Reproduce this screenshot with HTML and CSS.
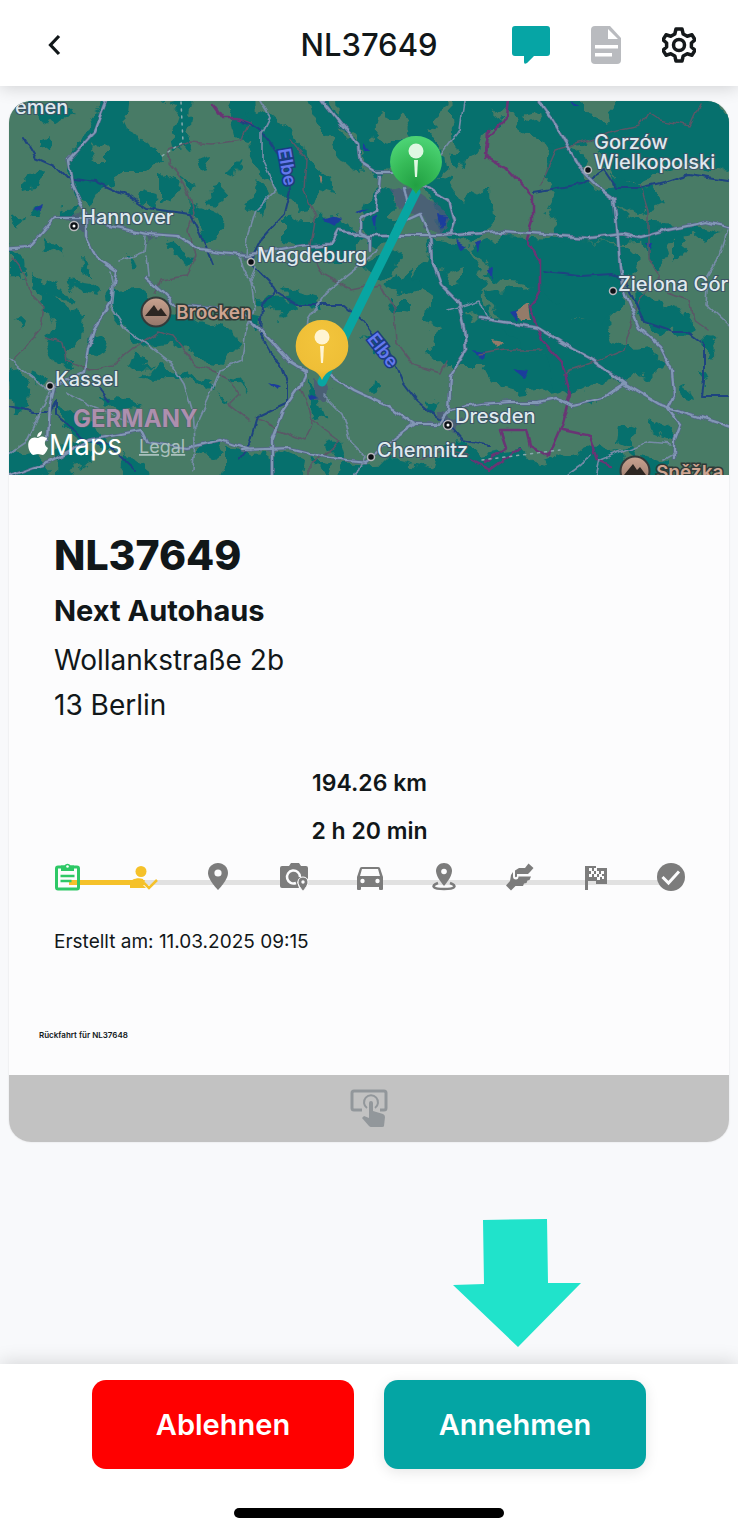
FILE: index.html
```html
<!DOCTYPE html>
<html lang="de">
<head>
<meta charset="utf-8">
<meta name="viewport" content="width=device-width, initial-scale=1">
<title>NL37649</title>
<link rel="stylesheet" href="styles.css">
</head>
<body>
<header class="topbar">
  <button class="icon-btn" aria-label="Zurück">
    <svg width="14" height="22" viewBox="0 0 14 22"><path d="M12 2 3.500 11l8.500 9" fill="none" stroke="#111719" stroke-width="3.200"/></svg>
  </button>
  <h1 class="topbar-title">NL37649</h1>
  <nav class="topbar-actions">
    <button class="icon-btn" aria-label="Nachrichten">
      <svg width="38" height="38" viewBox="0 0 38 38"><path d="M3 0h32q3 0 3 3v24q0 3-3 3H22l-7 7q-3 2-3-1v-6H3q-3 0-3-3V3q0-3 3-3z" fill="#06a5a5"/></svg>
    </button>
    <button class="icon-btn" aria-label="Dokument">
      <svg width="30" height="38" viewBox="0 0 30 38"><path d="M4 0h15l11 12v22q0 4-4 4H4q-4 0-4-4V4q0-4 4-4z" fill="#b9bbbf"/><path d="M17 3v10h10zM4 19h23v3.500H4zM4 27h17v3.500H4z" fill="#fff"/></svg>
    </button>
    <button class="icon-btn" aria-label="Einstellungen">
      <svg width="34" height="36" viewBox="0 0 34 36"><path d="M14 2h6l1.200 5 4 2.200 4.800-1.400 3 5-3.600 3.200v4l3.600 3.200-3 5-4.800-1.400-4 2.200-1.200 5h-6l-1.200-5-4-2.200L4 28.200l-3-5L4.600 20v-4L1 12.800l3-5 4.800 1.400 4-2.200z" fill="none" stroke="#15191b" stroke-width="3.500" stroke-linejoin="round"/><circle cx="17" cy="18" r="5.500" fill="none" stroke="#15191b" stroke-width="3.500"/></svg>
    </button>
  </nav>
</header>

<main class="content">
  <article class="card">
    <svg class="map" viewBox="9 101 720 374" preserveAspectRatio="xMidYMid slice" role="img" aria-label="Karte mit Route">
      <defs>
        <filter id="rough" x="-5%" y="-5%" width="110%" height="110%" color-interpolation-filters="sRGB">
          <feTurbulence type="fractalNoise" baseFrequency="0.06" numOctaves="3" seed="8" result="n"/>
          <feDisplacementMap in="SourceGraphic" in2="n" scale="20" xChannelSelector="R" yChannelSelector="G"/>
        </filter>
        <filter id="wiggle" x="-5%" y="-5%" width="110%" height="110%" color-interpolation-filters="sRGB">
          <feTurbulence type="fractalNoise" baseFrequency="0.07" numOctaves="2" seed="3" result="n"/>
          <feDisplacementMap in="SourceGraphic" in2="n" scale="7" xChannelSelector="R" yChannelSelector="G"/>
        </filter>
        <radialGradient id="green" cx=".5" cy=".85" r=".8"><stop offset="0" stop-color="#22a043"/><stop offset=".55" stop-color="#36bb58"/><stop offset="1" stop-color="#4bd273"/></radialGradient>
        <radialGradient id="yellow" cx=".5" cy=".35" r=".7"><stop offset="0" stop-color="#f3c53c"/><stop offset=".7" stop-color="#efbf37"/><stop offset="1" stop-color="#dfa622"/></radialGradient>
        <linearGradient id="peak" x2="0" y2="1"><stop stop-color="#c9a28f"/><stop offset="1" stop-color="#94766a"/></linearGradient>
      </defs>
      <rect x="0" y="90" width="740" height="400" fill="#487b66"/>

      <g fill="#06706d" filter="url(#rough)">
        <path fill-rule="evenodd" d="M107 90H128L126 118 135 138 155 150 160 162 148 172 120 172 112 184 96 194 88 208 76 192 68 172 70 155 90 135ZM92 148 98 142 106 150 106 164 98 164Z"/>
        <path d="M28 104 66 102 72 116 52 122 32 112ZM36 140 52 136 50 150 38 152ZM24 180 44 172 40 186 26 188ZM30 210 42 204 44 216 32 216ZM60 212 76 208 74 220 60 218ZM12 218 22 216 18 230ZM44 238 62 248 60 258 46 248ZM82 258 96 264 96 272 84 270ZM10 244 22 262 24 282 10 270ZM30 274 60 284 72 302 54 298 34 290ZM126 256 138 264 134 274ZM166 240 188 256 184 264 168 254Z"/>
        <path d="M162 90 196 90 190 118 186 136 190 146 176 150 172 132 178 114ZM160 178 174 174 180 190 174 202 160 200ZM144 190 156 194 150 206 140 204ZM184 176 196 184 190 190ZM196 156 214 152 208 170 200 172ZM226 172 242 156 236 176ZM208 186 224 184 222 206 210 204ZM184 200 216 210 226 230 206 244 196 222ZM224 90 260 90 262 144 236 140Z"/>
        <path d="M246 114 266 110 290 130 304 148 306 160 320 172 330 176 332 196 318 192 312 212 296 214 284 190 264 176 250 150ZM256 178 270 194 262 218 248 206ZM284 218 340 216 362 238 352 260 322 262 300 246 284 242Z"/>
        <path d="M308 90 336 110 346 138 358 150 362 172 340 162 332 140 314 120Z"/>
        <path fill-rule="evenodd" d="M334 90H450L440 118 428 132 446 146 448 168 430 184 412 176 394 160 384 176 366 166 350 132 338 122ZM380 112 400 118 410 134 386 144 374 136Z"/>
        <path d="M374 188 394 196 386 214 398 222 394 238 372 246 360 224 368 204ZM426 180 450 182 462 200 490 188 494 228 468 246 440 234 434 204ZM450 90 490 90 500 122 482 136 476 160 456 170 452 136Z"/>
        <path fill-rule="evenodd" d="M486 90H570L584 104 604 130 590 140 562 150 546 144 524 134 520 118 498 112ZM526 112 540 110 542 120 532 122Z"/>
        <path d="M622 90 706 90 740 124 740 176 690 162 652 176 620 184 604 164 594 136 610 118Z"/>
        <path d="M548 142 580 152 588 180 610 200 628 216 650 224 700 228 724 232 690 238 620 242 560 240 548 212 558 192 544 174ZM610 176 650 186 664 204 640 216 614 202ZM594 194 614 190 622 206 600 208Z"/>
        <path d="M472 248 500 236 560 238 620 244 640 264 624 280 626 300 604 320 560 322 544 300 526 284 494 280ZM640 232 664 230 670 256 656 274 644 250ZM676 232 690 244 676 262Z"/>
        <path fill-rule="evenodd" d="M430 240 470 250 488 280 480 304 500 324 520 328 538 346 556 366 562 386 520 392 498 386 484 366 448 366 430 350 440 332 420 322 434 296 414 280ZM444 272 462 266 462 282 450 286ZM468 312 480 318 472 326Z"/>
        <path d="M484 294 530 288 560 306 576 322 604 318 612 340 636 352 640 374 600 384 576 396 554 388 548 356 528 352 504 332ZM624 350 650 346 666 364 650 380 630 372ZM606 372 618 370 616 380Z"/>
        <path d="M382 286 412 268 420 286 400 296ZM392 300 414 300 412 312 394 310ZM362 262 400 252 394 276 372 280ZM636 290 660 300 676 322 660 334 640 320ZM664 304 680 310 694 330 680 338ZM702 338 720 340 712 354ZM674 382 690 386 694 400 678 394ZM698 372 710 376 704 386Z"/>
        <path d="M108 292 134 288 160 310 196 318 232 330 236 350 222 364 196 360 178 342 144 346 124 330 112 314ZM40 292 58 300 84 316 82 338 66 352 70 368 52 366 44 344 54 326ZM94 334 108 342 104 356 90 352ZM66 280 92 284 98 296 72 290ZM10 320 24 318 20 328ZM8 368 20 366 30 382 28 404 14 416ZM28 368 48 376 38 390ZM126 370 132 354 152 368ZM140 376 160 366 196 378 216 382 210 390 180 378ZM214 390 232 400 230 404ZM226 376 240 378 244 390ZM98 396 128 398 144 410 118 414ZM56 402 74 412 96 430 110 446 88 446 62 424Z"/>
        <path d="M0 456 34 450 50 470 40 490 0 490ZM54 448 84 444 98 460 72 472 100 490 52 490ZM126 454 142 458 150 480 120 480ZM196 446 214 440 224 452 214 460 194 454ZM226 446 250 456 280 450 304 460 300 490 216 490 226 466ZM312 458 330 462 326 478ZM256 296 284 298 298 310 282 318ZM280 288 318 298 320 306 290 304ZM364 338 380 344 376 352ZM304 380 318 398 326 418 314 420ZM372 378 380 386 370 392ZM426 398 440 404 432 412ZM240 312 260 316 256 334ZM324 446 340 440 346 460ZM438 444 466 440 480 456 524 448 540 466 580 450 600 440 618 456 640 490 430 490ZM646 418 670 428 668 438 648 430ZM620 426 636 432 632 446 618 440ZM584 398 596 402 590 408ZM646 456 668 464 662 478 640 476ZM344 464 400 462 440 472 440 490 340 490ZM612 450 634 446 640 458Z"/>
      </g>

      <g fill="#4b587b" opacity=".75" filter="url(#rough)">
        <path d="M388 194 416 188 440 206 450 222 440 238 426 222 410 210 396 206ZM62 220 82 218 90 232 74 230ZM312 380 330 384 326 400 314 400ZM438 414 460 420 458 432 442 430ZM144 236 152 238 148 246ZM46 380 58 382 54 394ZM244 254 256 256 250 266Z"/>
      </g>
      <g fill="#1c3d9c" filter="url(#wiggle)">
        <path d="M32 209 42 205 40 212ZM322 220 336 216 342 218 334 226ZM355 212 368 208 360 214ZM372 216 377 216 376 232ZM438 214 446 216 442 230ZM456 240 466 246 460 250ZM474 242 480 240 478 252ZM488 270 493 266 492 280ZM364 142 370 150 364 150ZM510 312 518 310 516 320ZM512 368 528 370 524 378ZM472 350 486 352 484 358ZM268 383 280 386 276 390ZM570 102 580 106 574 106ZM645 244 652 244 650 250ZM308 394 318 398 310 400Z"/>
      </g>
      <path fill="#947b69" filter="url(#wiggle)" d="M516 312 528 304 530 320 520 320ZM492 340 504 342 498 348ZM320 176 324 178 322 184Z"/>

      <g fill="none" stroke-linejoin="round" stroke-linecap="round">
        <g stroke="#5b5767" stroke-width="1.500" filter="url(#wiggle)">
          <path d="M250 120 242 140 212 144 190 142 170 150 168 162 180 176 188 194 194 212 188 230 196 256 186 276 160 280 154 294"/>
          <path d="M12 258 24 274 30 294 44 308 40 330 22 352 12 362M46 338 62 342 66 360 90 370 110 366 132 348 158 332 172 336 196 366 216 372 232 380 240 394 230 404 250 420"/>
          <path d="M290 140 306 160 304 190 316 216 310 250 322 274 352 290 380 284 394 310 396 342 414 366 440 374 446 360"/>
          <path d="M540 186 556 150 590 140 612 132 640 126 648 112 660 120 690 126 700 104M640 184 648 210 648 260 660 276 638 300 624 350 600 360 570 370 564 376"/>
          <path d="M256 418 280 430 304 440 312 424 306 400 300 386M312 420 340 440 332 450 310 464 310 478M420 460 440 450 470 454"/>
          <path d="M480 354 506 350 540 350M668 292 690 300 694 320 708 330"/>
        </g>
        <g stroke="#693574" stroke-width="2.500" filter="url(#wiggle)">
          <path d="M508 98 506 118 488 136 484 154 506 168 532 196 532 222 526 240 540 260 540 290 530 308 542 340 562 362 570 394 562 424 548 456 530 446 526 430 500 430 506 448 484 462M562 430 590 436 598 460 612 466M470 460 490 470 520 448M488 130 486 158"/>
          <path d="M212 104 222 118 236 118 252 124"/>
        </g>
        <g stroke="#1e4380" stroke-width="2" filter="url(#wiggle)">
          <path d="M24 138 36 158 54 166 66 178 96 182 128 196 146 208 174 212 190 214 200 234 212 266"/>
          <path d="M240 120 258 128 270 142 286 164 290 190 284 214 262 238 250 262 270 282 276 292 296 304 320 304 344 304 362 320 378 342 396 364 404 384 416 400 430 412 448 424 462 440 490 446"/>
          <path d="M534 192 570 186 582 184 604 170 616 188 640 188 664 182 688 174 728 180"/>
          <path d="M544 272 580 276 612 274 628 286 636 304 644 322 672 332 688 332 704 344 704 380 702 396 728 396"/>
          <path d="M274 290 262 306 260 334 270 352 280 362 288 384 288 402 258 416 250 444 240 458 M10 406 34 412 50 412 56 400 56 414 86 440 110 446 136 470 M96 384 110 402"/>
        </g>
        <g filter="url(#wiggle)">
          <g stroke="#56668a" stroke-width="3.500">
            <path d="M106 100 94 132 68 160 72 184 86 214 86 236 98 260 116 272 110 304 94 330 88 350 84 372 54 386 50 404 48 440M0 248 30 246 54 218 86 218 110 226 148 234 178 236 200 250 246 256 290 248 330 244 338 230 368 236 440 236 500 232 530 234 590 238 622 234 640 238 668 230 706 222 740 230"/>
            <path d="M322 100 342 126 358 144 360 162 376 172 404 172 428 188 448 200 454 222 450 234M379 176 376 210 362 220 362 232 370 238 370 250M404 188 408 206 398 224 420 214 430 236 432 262 440 284 458 302 464 328 466 350 450 376 448 410 438 424 414 424 388 406 354 390 332 376 308 358 M540 102 554 122 568 146 582 170 600 188 614 198 618 238 620 266 622 284 630 304 640 328 660 346 672 370 674 396 668 408 680 424 674 440 674 460"/>
            <path d="M448 410 480 404 510 402 538 402 556 398 572 406 602 398 624 384 658 404 690 414 740 430M480 318 516 324 538 328 564 344 590 358 626 384M146 278 164 294 176 306 240 312 254 324 272 342 290 362 306 372 302 384 284 410 272 440 272 480M240 450 290 448 330 458 366 462 392 440 414 424M0 480 50 462 90 440 140 430 146 442 186 448 220 440 250 450"/>
          </g>
          <g stroke="#8297b5" stroke-width="2.200">
            <path d="M106 100 94 132 68 160 72 184 86 214 86 236 98 260 116 272 110 304 94 330 88 350 84 372 54 386 50 404 48 440M0 248 30 246 54 218 86 218 110 226 148 234 178 236 200 250 246 256 290 248 330 244 338 230 368 236 440 236 500 232 530 234 590 238 622 234 640 238 668 230 706 222 740 230"/>
            <path d="M322 100 342 126 358 144 360 162 376 172 404 172 428 188 448 200 454 222 450 234M379 176 376 210 362 220 362 232 370 238 370 250M404 188 408 206 398 224 420 214 430 236 432 262 440 284 458 302 464 328 466 350 450 376 448 410 438 424 414 424 388 406 354 390 332 376 308 358 M540 102 554 122 568 146 582 170 600 188 614 198 618 238 620 266 622 284 630 304 640 328 660 346 672 370 674 396 668 408 680 424 674 440 674 460"/>
            <path d="M448 410 480 404 510 402 538 402 556 398 572 406 602 398 624 384 658 404 690 414 740 430M480 318 516 324 538 328 564 344 590 358 626 384M146 278 164 294 176 306 240 312 254 324 272 342 290 362 306 372 302 384 284 410 272 440 272 480M240 450 290 448 330 458 366 462 392 440 414 424M0 480 50 462 90 440 140 430 146 442 186 448 220 440 250 450"/>
          </g>
          <g stroke="#758ba6" stroke-width="1.700">
            <path d="M110 272 114 290 112 310 124 328 142 340 170 362 184 384 192 410 194 442 192 470M194 430 208 400 220 370 242 360 246 330 254 312 250 280 256 266 M260 102 270 118 262 134 262 160 276 190 256 210 248 236 246 256M464 102 460 130 448 146 440 156M378 250 354 270 326 292 308 320 304 350 M0 352 30 376 50 392 34 424 24 444 0 460M66 392 90 406 134 424 M728 230 720 256 708 276 706 304 740 336M324 396 342 414 350 442 364 456 354 480M596 476 600 460 624 450 650 442 670 444 M664 460 674 454M240 256 244 270 256 292M146 236 144 252 120 262 M146 256 148 276M566 476 580 466 592 454M448 310 480 300 488 318"/>
          </g>
        </g>
        <path d="M181 102 183 142 162 156M482 460 560 450" stroke="#88a9ad" stroke-width="1.500" stroke-dasharray="2 5"/>
        <path d="M416 192 322 382" stroke="#08a5a2" stroke-width="9"/>
      </g>

      <g class="place">
        <text x="15" y="114">emen</text>
        <text x="81" y="224">Hannover</text>
        <text x="257" y="262">Magdeburg</text>
        <text x="594" y="149">Gorzów</text>
        <text x="594" y="169">Wielkopolski</text>
        <text x="618" y="291">Zielona Gór</text>
        <text x="55" y="386">Kassel</text>
        <text x="455" y="423">Dresden</text>
        <text x="377" y="457">Chemnitz</text>
      </g>
      <g fill="#0c1015" stroke="#b8b8bd" stroke-width="1.500">
        <circle cx="74" cy="226" r="4.500"/><circle cx="251" cy="262" r="3.500"/><circle cx="588" cy="170" r="3.500"/><circle cx="613" cy="291" r="3.500"/><circle cx="50" cy="386" r="3.500"/><circle cx="448" cy="425" r="4.500"/><circle cx="371" cy="457" r="3.500"/>
      </g>
      <circle cx="74" cy="226" r="1.500" fill="#fff"/><circle cx="448" cy="425" r="1.500" fill="#fff"/>
      <text class="river" text-anchor="middle" transform="translate(281 168) rotate(80)">Elbe</text>
      <text class="river" text-anchor="middle" transform="translate(378 354) rotate(52)">Elbe</text>
      <g class="peak">
        <g id="brocken"><circle cx="156" cy="312" r="14.500" fill="url(#peak)" stroke="#343b3b" stroke-width="2"/><path d="M145 316 154 305 158 311 161 308 167 316Z" fill="#2d2622"/></g>
        <use href="#brocken" x="479" y="159"/>
        <text x="176" y="319">Brocken</text>
        <text x="656" y="479">Sněžka</text>
      </g>
      <text class="country" x="73" y="427">GERMANY</text>
      <g fill="#fff">
        <path d="M38 438c2-1 4-2 6-1 2 0 3 1 3 2-3 2-3 7 1 9-1 3-3 6-5 7-2 0-3-1-5-1s-3 1-5 1c-4-2-6-10-4-14 2-4 6-4 9-3zM37 437c0-3 2-5 5-6 0 3-2 6-5 6z"/>
        <text class="maps" x="49" y="455">Maps</text>
      </g>
      <text class="legal" x="139" y="453">Legal</text>

      <path d="M416 136a25.500 25.500 0 0 1 9 49.500Q419 188 416 194 413 188 407 185.500A25.500 25.500 0 0 1 416 136z" fill="url(#green)"/>
      <circle cx="416" cy="151" r="7.500" fill="#dff7e2"/><path d="M414 160h4l-1 17h-2z" fill="#dff7e2"/>
      <path d="M322 320a26 26 0 0 1 9 50.500Q325 373 322 380 319 373 313 370.500A26 26 0 0 1 322 320z" fill="url(#yellow)"/>
      <circle cx="322" cy="337" r="7.500" fill="#fff4d2"/><path d="M320 346h4l-1 17h-2z" fill="#fff4d2"/>
    </svg>

    <section class="details">
      <h2 class="order">NL37649</h2>
      <p class="company">Next Autohaus</p>
      <address class="address">Wollankstraße 2b<br>13 Berlin</address>
      <p class="metric">194.26 km</p>
      <p class="metric">2 h 20 min</p>
      <ol class="steps">
        <li class="done"><svg viewBox="0 0 28 28"><rect x="2.500" y="4" width="22" height="22" rx="1.500" fill="none" stroke="currentColor" stroke-width="3"/><path d="M7 2.500h3.500a3.500 3.500 0 0 1 6 0H20V8H7z" fill="currentColor"/><circle cx="13.500" cy="3.500" r="1.300" fill="#fff"/><path d="M6.500 13h14M6.500 18h11" stroke="currentColor" stroke-width="2.500"/></svg></li>
        <li class="current"><svg viewBox="0 0 28 28"><circle cx="12" cy="8.500" r="5.500" fill="currentColor"/><path d="M1 25v-4c0-5 8-7 13-5l1 3-2 2 4 4z" fill="currentColor"/><path d="m15 20 5 5 8-8" fill="none" stroke="currentColor" stroke-width="2.500"/></svg></li>
        <li><svg viewBox="0 0 28 28"><path d="M13 0C7.500 0 3 4.300 3 10c0 7 10 17 10 17s10-10 10-17c0-5.700-4.500-10-10-10z" fill="currentColor"/><circle cx="13" cy="10" r="3.600" fill="#fcfcfd"/></svg></li>
        <li><svg viewBox="0 0 28 28"><path d="M2 3h7l2-3h8l2 3h5q2 0 2 2v11l-5-2-6 5 2 6H2q-2 0-2-2V5q0-2 2-2z" fill="currentColor"/><path d="M20 14a6.500 6.500 0 1 0-4 6" fill="none" stroke="#fcfcfd" stroke-width="2.500"/><path d="M23 14c-3 0-5 2-5 5 0 4 5 9 5 9s5-5 5-9c0-3-2-5-5-5z" fill="currentColor" stroke="#fcfcfd"/><circle cx="23" cy="19" r="1.700" fill="#fcfcfd"/></svg></li>
        <li><svg viewBox="0 0 28 28"><path d="M4 5q.500-1 2-1h16q1.500 0 2 1l3 9v12q0 1-1 1h-2q-1 0-1-1v-2H5v2q0 1-1 1H2q-1 0-1-1V14z" fill="currentColor"/><path d="M6 6h16l2 7H4z" fill="#fcfcfd"/><circle cx="6.500" cy="18" r="2.200" fill="#fcfcfd"/><circle cx="21.500" cy="18" r="2.200" fill="#fcfcfd"/></svg></li>
        <li><svg viewBox="0 0 28 28"><path d="M7 20c-8 3-5 6 6 6s14-3 6-6" fill="none" stroke="currentColor" stroke-width="2.500"/><path d="M13 0C8.500 0 5 3.500 5 8c0 6 8 15 8 15s8-9 8-15c0-4.500-3.500-8-8-8z" fill="currentColor"/><circle cx="13" cy="8.500" r="2.800" fill="#fcfcfd"/></svg></li>
        <li><svg viewBox="0 0 28 28"><path d="M5 12 7 9V13.500q0 3 3 3 2.500 0 2.500-3H25l-1.500 3.500-2 .500-1 2.500-2.500.500-1 2.500H9.500L5 27.500 0 22.500 4 18Z" fill="currentColor"/><path d="M9 7.500 13 5h6l3.500-4.500L27.500 5 24 9l-2 2H11v2.500q-1.500 1.500-2 0Z" fill="currentColor"/></svg></li>
        <li><svg viewBox="0 0 28 28"><path d="M3 3h11v2h11v16H14v-3H6v9H3z" fill="currentColor"/><path d="M7 5h3v3H7zm5 0h3v3h-3zM9 8h3v3H9zm5 0h3v3h-3zm5 0h3v3h-3zM7 11h3v3H7zm5 0h3v3h-3zm5 0h3v3h-3zm-2 3h3v3h-3zm5-1h2v3h-2z" fill="#fcfcfd"/></svg></li>
        <li><svg viewBox="0 0 28 28"><circle cx="14" cy="14" r="14" fill="currentColor"/><path d="m5.500 14 6 6L22 8.500" fill="none" stroke="#fcfcfd" stroke-width="3"/></svg></li>
      </ol>
      <p class="created">Erstellt am: 11.03.2025 09:15</p>
    </section>
    <p class="note">Rückfahrt für NL37648</p>
    <button class="tap" aria-label="Details öffnen">
      <svg width="38" height="38" viewBox="0 0 38 38"><path d="M12 21H4q-2 0-2-2V4q0-2 2-2h30q2 0 2 2v15q0 2-2 2h-4" fill="none" stroke="#92979b" stroke-width="3"/><path d="M17 19a7 7 0 1 1 8 0" fill="none" stroke="#92979b" stroke-width="2"/><path d="M19 14q0-2 2-2t2 2v8l10 3q2 1 2 3l-1 9q0 1-2 1H21q-1 0-2-1l-7-8 2-2 5 2z" fill="#92979b"/></svg>
    </button>
  </article>
  <svg class="arrow" viewBox="0 0 128 128" aria-hidden="true"><path d="M30 1 94 0l1 64h33L65 128 0 66l31-1z" fill="#20e3cb"/></svg>
</main>

<footer class="actions">
  <div class="buttons">
    <button class="btn reject">Ablehnen</button>
    <button class="btn accept">Annehmen</button>
  </div>
  <div class="home-indicator"></div>
</footer>
</body>
</html>
```
FILE: styles.css
```css
* { box-sizing: border-box; }

body {
  margin: 0;
  min-height: 100vh;
  display: flex;
  flex-direction: column;
  background: #f8f9fb;
  color: #111719;
  font-family: Inter, "Liberation Sans", sans-serif;
}

h1, h2, p { margin: 0; }
button { font: inherit; border: 0; padding: 0; cursor: pointer; }
svg { display: block; }

.topbar {
  display: grid;
  grid-template-columns: 1fr auto 1fr;
  align-items: center;
  padding: 24px 42px 20px;
  background: #fff;
  box-shadow: 0 2px 16px rgba(0, 0, 0, .16);
  z-index: 1;
}
.icon-btn { background: none; justify-self: start; }
.topbar > .icon-btn { padding-left: 5px; }
.topbar-title { font-size: 31px; line-height: 42px; font-weight: 500; }
.topbar-actions { display: flex; align-items: center; justify-content: flex-end; gap: 41px; }

.content { position: relative; flex: 1; padding: 15px 9px; }

.card {
  display: flex;
  flex-direction: column;
  overflow: hidden;
  border-radius: 22px;
  background: #fcfcfd;
  box-shadow: 0 0 2px rgba(0, 0, 0, .12);
}
.map { width: 100%; aspect-ratio: 720 / 374; }

.place text {
  font-size: 20px;
  font-weight: 500;
  fill: #dfe9ee;
  stroke: #3c5364;
  stroke-width: 2px;
  paint-order: stroke;
}
.river {
  font-size: 18px;
  font-weight: 600;
  fill: #6479ee;
  stroke: #1c3b82;
  stroke-width: 3px;
  paint-order: stroke;
}
.peak text {
  font-size: 19px;
  font-weight: 600;
  fill: #cda491;
  stroke: #303b38;
  stroke-width: 3px;
  paint-order: stroke;
}
.country { font-size: 24px; font-weight: 700; fill: #ad8fae; stroke: #4d6068; stroke-width: 1px; paint-order: stroke; }
.maps { font-size: 28px; }
.legal { font-size: 18px; fill: #a9c0bc; text-decoration: underline; }

.details { padding: 58px 44px 0 45px; }
.order { font-size: 41px; line-height: 44px; font-weight: 800; }
.company { margin-top: 12px; font-size: 29px; line-height: 44px; font-weight: 700; }
.address { margin-top: 5px; font-size: 28px; line-height: 45px; font-style: normal; }
.metric { font-size: 23px; line-height: 48px; font-weight: 600; text-align: center; }
.address + .metric { margin-top: 31px; }

.steps {
  display: flex;
  justify-content: space-between;
  margin: 8px 0 0;
  padding: 0;
  list-style: none;
  color: #7c7c7c;
  background:
    linear-gradient(#f5c12a, #f5c12a) 15px 17px / 12% 5px no-repeat,
    linear-gradient(#e1e1e1, #e1e1e1) 90px 17px / 84% 5px no-repeat;
}
.steps li { width: 28px; height: 28px; }
.steps svg { width: 28px; height: 28px; overflow: visible; }
.steps .done { color: #2ec866; }
.steps .current { color: #f5c12a; }

.created { margin-top: 37px; font-size: 19px; line-height: 28px; }
.note { padding: 74px 30px 35px; font-size: 8px; line-height: 10px; font-weight: 600; }

.tap { display: flex; justify-content: center; padding: 14px 0 15px; background: #c2c2c2; }

.arrow { position: absolute; left: 61.4%; bottom: 17px; width: 128px; height: 128px; }

.actions {
  padding: 16px 92px 15px;
  background: #fff;
  box-shadow: 0 -2px 18px rgba(0, 0, 0, .14);
}
.buttons { display: grid; grid-template-columns: 1fr 1fr; gap: 30px; }
.btn {
  padding: 24px 0;
  border-radius: 14px;
  color: #fff;
  font-size: 29px;
  line-height: 41px;
  font-weight: 600;
}
.reject { background: #f00; }
.accept { background: #04a5a4; box-shadow: 0 3px 14px rgba(0, 0, 0, .1); }
.home-indicator { width: 270px; max-width: 60%; height: 10px; margin: 39px auto 0; border-radius: 5px; background: #000; }
```
